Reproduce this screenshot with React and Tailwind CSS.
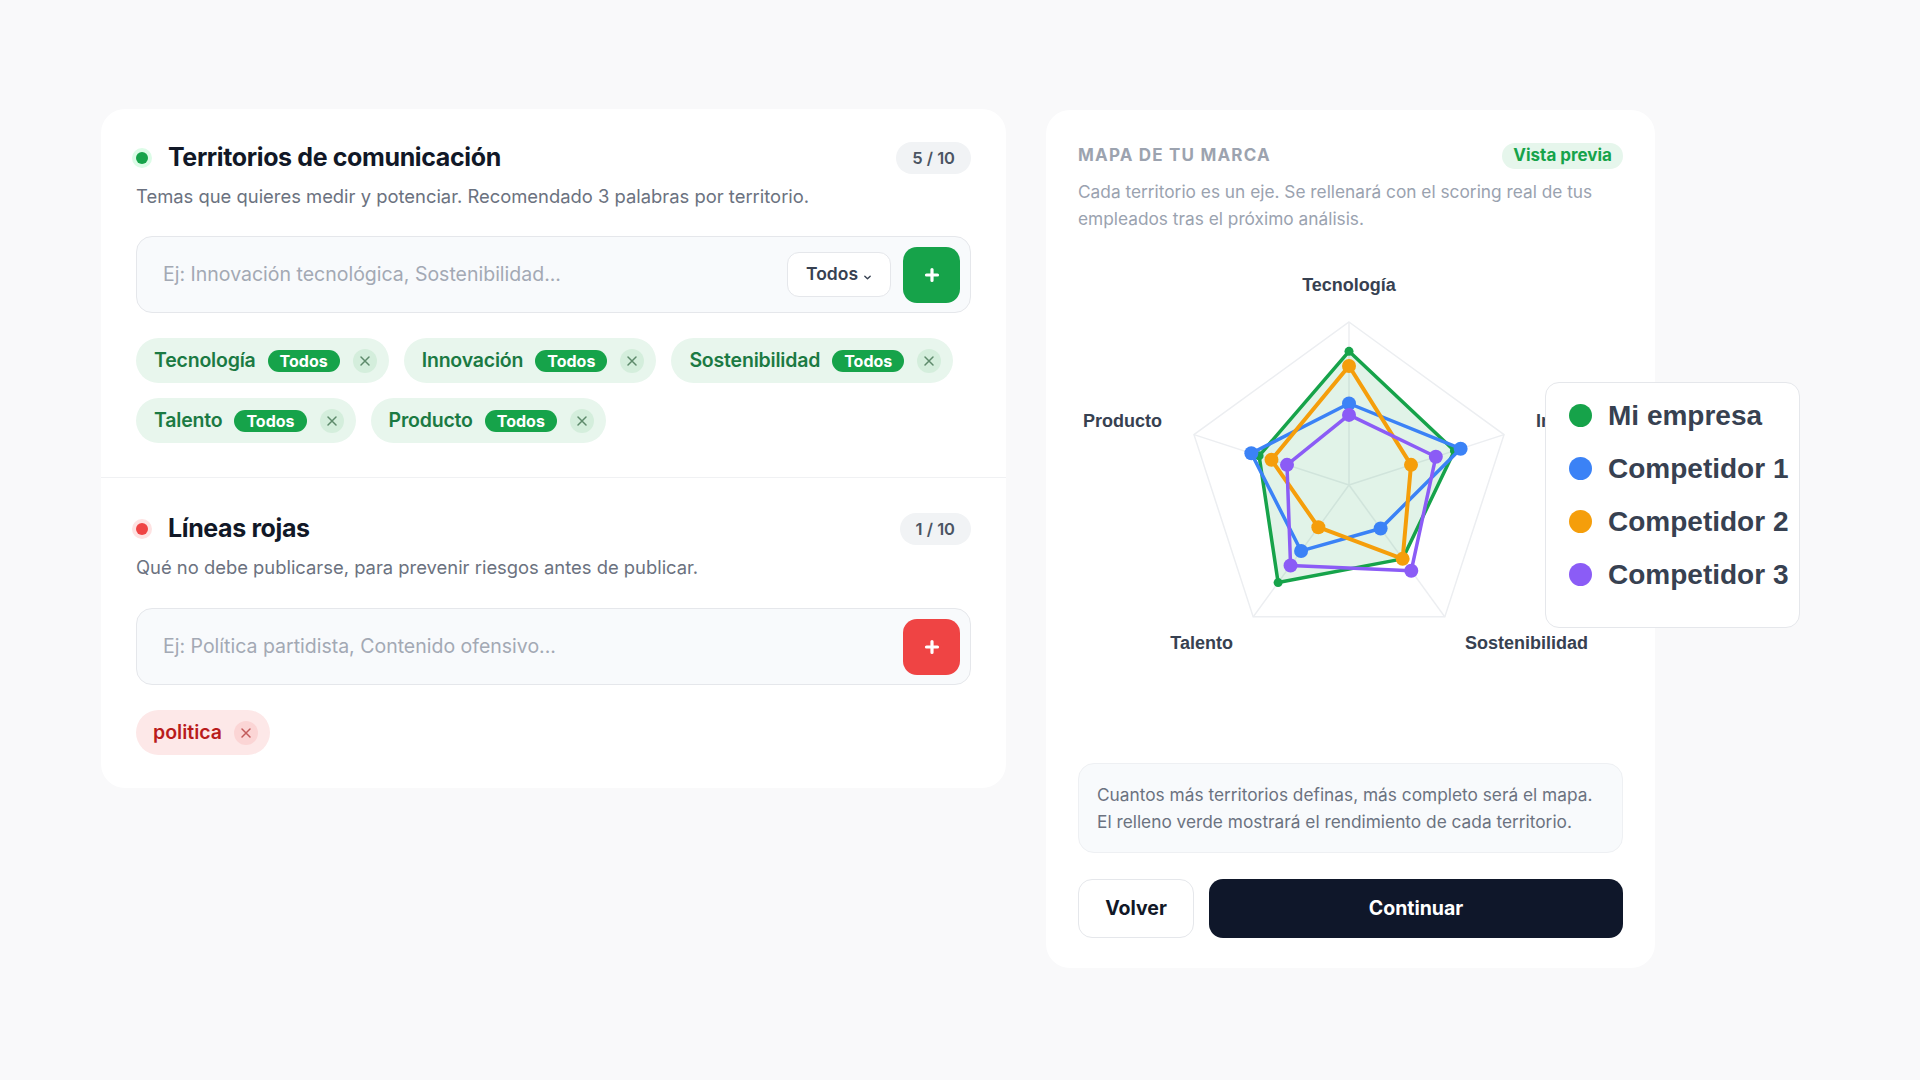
import React from "react";

const AXES = ["Tecnología", "Innovación", "Sostenibilidad", "Talento", "Producto"];

const SERIES = [
  { name: "Mi empresa", color: "#16a34a", values: [0.82, 0.68, 0.56, 0.74, 0.58], dot: 4.5, width: 3.5, fill: "rgba(22,163,74,0.13)" },
  { name: "Competidor 1", color: "#3b82f6", values: [0.5, 0.72, 0.33, 0.5, 0.63], dot: 7, width: 3.5 },
  { name: "Competidor 2", color: "#f59e0b", values: [0.73, 0.4, 0.56, 0.32, 0.5], dot: 7, width: 4 },
  { name: "Competidor 3", color: "#8b5cf6", values: [0.43, 0.56, 0.65, 0.61, 0.4], dot: 7, width: 3.5 },
];

const TERRITORIES = ["Tecnología", "Innovación", "Sostenibilidad", "Talento", "Producto"];

// radar geometry
const CX = 271;
const CY = 244;
const R = 163;

function point(i, r) {
  const a = ((-90 + 72 * i) * Math.PI) / 180;
  return [CX + r * R * Math.cos(a), CY + r * R * Math.sin(a)];
}

function PlusIcon() {
  return (
    <svg viewBox="0 0 16 16" className="w-4 h-4" fill="none" stroke="currentColor" strokeWidth={3.2} strokeLinecap="round">
      <path d="M8 2.5v11M2.5 8h11" />
    </svg>
  );
}

function XIcon() {
  return (
    <svg viewBox="0 0 12 12" className="w-3 h-3" fill="none" stroke="currentColor" strokeWidth={1.5} strokeLinecap="round">
      <path d="M2 2l8 8M10 2l-8 8" />
    </svg>
  );
}

function Chip({ label }) {
  return (
    <div className="h-[45px] rounded-full bg-[#e8f6ed] flex items-center pl-[18px] pr-[12px]">
      <span className="text-[19.5px] font-semibold text-[#1b7a43] tracking-[-0.01em]">{label}</span>
      <span className="ml-3 h-[22px] px-3 rounded-full bg-[#16a34a] text-white text-[16px] font-bold flex items-center">
        Todos
      </span>
      <span className="ml-[13px] w-[24px] h-[24px] rounded-full bg-[#d4eedc] flex items-center justify-center text-[#5d8a6b]">
        <XIcon />
      </span>
    </div>
  );
}

function SectionHeader({ dot, ring, title, count }) {
  return (
    <div className="flex items-center justify-between h-8">
      <div className="flex items-center gap-5">
        <span className={`w-3 h-3 rounded-full ${dot} ring-4 ${ring}`} />
        <h2 className="text-[25px] font-bold text-[#111827] tracking-[-0.015em]">{title}</h2>
      </div>
      <span className="h-8 px-4 rounded-full bg-[#f1f3f5] text-[16.5px] font-semibold text-[#4b5563] flex items-center">
        {count}
      </span>
    </div>
  );
}

function Radar() {
  const ring = AXES.map((_, i) => point(i, 1).join(",")).join(" ");
  return (
    <svg width="544" height="500" viewBox="0 0 544 500" className="block">
      <polygon points={ring} fill="none" stroke="#eceef1" strokeWidth={1.5} />
      {AXES.map((_, i) => {
        const [x, y] = point(i, 1);
        return <line key={i} x1={CX} y1={CY} x2={x} y2={y} stroke="#eceef1" strokeWidth={1.5} />;
      })}
      {SERIES.map((s) => {
        const pts = s.values.map((v, i) => point(i, v));
        return (
          <g key={s.name}>
            <polygon
              points={pts.map((p) => p.join(",")).join(" ")}
              fill={s.fill || "none"}
              stroke={s.color}
              strokeWidth={s.width}
              strokeLinejoin="round"
            />
            {pts.map(([x, y], i) => (
              <circle key={i} cx={x} cy={y} r={s.dot} fill={s.color} />
            ))}
          </g>
        );
      })}
      <g fontFamily="'Liberation Sans', Arial, sans-serif" fontWeight="700" fontSize="18" fill="#374151">
        <text x={CX} y={45} textAnchor="middle" dominantBaseline="middle">Tecnología</text>
        <text x={458} y={181} textAnchor="start" dominantBaseline="middle">Innovación</text>
        <text x={387} y={403} textAnchor="start" dominantBaseline="middle">Sostenibilidad</text>
        <text x={155} y={403} textAnchor="end" dominantBaseline="middle">Talento</text>
        <text x={84} y={181} textAnchor="end" dominantBaseline="middle">Producto</text>
      </g>
    </svg>
  );
}

export default function App() {
  return (
    <div className="min-h-screen bg-[#f9f9fa] pl-[101px] pt-[109px] flex items-start gap-10 font-['Inter','Noto_Sans',sans-serif]">
      {/* Columna izquierda: territorios + líneas rojas */}
      <div className="w-[905px] bg-white rounded-[24px]">
        <div className="px-[35px] pt-[33px] pb-[34px] border-b-[1.5px] border-[#f0f1f3]">
          <SectionHeader dot="bg-[#16a34a]" ring="ring-[#dcfce7]" title="Territorios de comunicación" count="5 / 10" />
          <p className="mt-[9px] text-[18.4px] leading-[26px] text-[#6b7280]">
            Temas que quieres medir y potenciar. Recomendado 3 palabras por territorio.
          </p>
          <div className="mt-[27px] h-[77px] rounded-2xl border border-[#e5e7eb] bg-[#f8fafc] flex items-center pl-[26px] pr-[10px] gap-3">
            <input
              placeholder="Ej: Innovación tecnológica, Sostenibilidad..."
              className="flex-1 min-w-0 bg-transparent text-[19.5px] text-[#111827] outline-none placeholder:text-[#a3a9b4]"
            />
            <button className="h-[45px] w-[104px] rounded-xl border border-[#e5e7eb] bg-white flex items-center justify-center gap-[5px] text-[17.5px] font-semibold text-[#374151]">
              Todos
              <svg viewBox="0 0 10 10" className="w-[9px] h-[9px] mt-[6px]" fill="none" stroke="currentColor" strokeWidth={1.5} strokeLinecap="round" strokeLinejoin="round">
                <path d="M2 3.5l3 3 3-3" />
              </svg>
            </button>
            <button className="w-[57px] h-[56px] rounded-[14px] bg-[#16a34a] text-white flex items-center justify-center">
              <PlusIcon />
            </button>
          </div>
          <div className="mt-[25px] flex flex-wrap gap-[15px]">
            {TERRITORIES.map((t) => (
              <Chip key={t} label={t} />
            ))}
          </div>
        </div>

        <div className="px-[35px] pt-[35px] pb-[33px]">
          <SectionHeader dot="bg-[#ef4444]" ring="ring-[#fee2e2]" title="Líneas rojas" count="1 / 10" />
          <p className="mt-[9px] text-[18.4px] leading-[26px] text-[#6b7280]">
            Qué no debe publicarse, para prevenir riesgos antes de publicar.
          </p>
          <div className="mt-[28px] h-[77px] rounded-2xl border border-[#e5e7eb] bg-[#f8fafc] flex items-center pl-[26px] pr-[10px] gap-3">
            <input
              placeholder="Ej: Política partidista, Contenido ofensivo..."
              className="flex-1 min-w-0 bg-transparent text-[19.5px] text-[#111827] outline-none placeholder:text-[#a3a9b4]"
            />
            <button className="w-[57px] h-[56px] rounded-[14px] bg-[#ef4444] text-white flex items-center justify-center">
              <PlusIcon />
            </button>
          </div>
          <div className="mt-[25px] flex">
            <div className="h-[45px] rounded-full bg-[#fde8e8] flex items-center pl-[17px] pr-[12px]">
              <span className="text-[19.5px] font-semibold text-[#b91c1c]">politica</span>
              <span className="ml-[12px] w-[24px] h-[24px] rounded-full bg-[#fbd5d5] flex items-center justify-center text-[#c25b5b]">
                <XIcon />
              </span>
            </div>
          </div>
        </div>
      </div>

      {/* Columna derecha: mapa de marca */}
      <div className="w-[609px] mt-[1px] bg-white rounded-[24px] px-8 pt-[33px] pb-[30px]">
        <div className="flex items-center justify-between h-[25px]">
          <span className="text-[17px] font-bold tracking-[0.07em] text-[#9ca3af]">MAPA DE TU MARCA</span>
          <span className="h-[26px] px-[11px] rounded-full bg-[#e6f6ec] text-[#16a34a] text-[17px] font-bold flex items-center">
            Vista previa
          </span>
        </div>
        <p className="mt-[10px] text-[17.3px] leading-[27px] text-[#9aa2af]">
          Cada territorio es un eje. Se rellenará con el scoring real de tus empleados tras el próximo análisis.
        </p>
        <div className="relative mt-[9px]">
          <Radar />
          <div className="absolute left-[467px] top-[141px] w-[255px] h-[246px] bg-white border border-[#e5e7eb] rounded-[14px] pt-[6px] font-['Liberation_Sans',Arial,sans-serif]">
            {SERIES.map((s) => (
              <div key={s.name} className="h-[53px] flex items-center pl-[23px] gap-4">
                <span className="w-[23px] h-[23px] rounded-full" style={{ background: s.color }} />
                <span className="text-[28px] font-bold text-[#374151] whitespace-nowrap">{s.name}</span>
              </div>
            ))}
          </div>
        </div>
        <div className="mt-[22px] rounded-2xl border border-[#eef0f3] bg-[#f8fafc] px-[18px] py-[17px] text-[17.3px] leading-[27px] text-[#6b7280]">
          Cuantos más territorios definas, más completo será el mapa.
          <br />
          El relleno verde mostrará el rendimiento de cada territorio.
        </div>
        <div className="mt-[26px] flex gap-[15px]">
          <button className="w-[116px] h-[59px] rounded-[14px] border border-[#e5e7eb] bg-white text-[19.5px] font-bold text-[#111827]">
            Volver
          </button>
          <button className="flex-1 h-[59px] rounded-[14px] bg-[#0f172a] text-[19.5px] font-bold text-white">
            Continuar
          </button>
        </div>
      </div>
    </div>
  );
}
